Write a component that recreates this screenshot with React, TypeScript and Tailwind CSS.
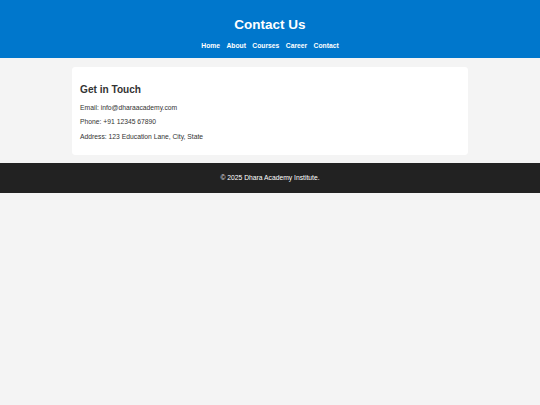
export default function App() {
  return (
    <div className="min-h-[405px] bg-[#f4f4f4] text-[#333] font-['Liberation_Sans',Arial,sans-serif]">
      <header className="bg-[#0077cc] text-white text-center pt-[8.2px] pb-[9px]">
        <h1 className="text-[13.5px] font-bold leading-[15.5px] my-[9px]">Contact Us</h1>
        <nav className="flex justify-center gap-[6.4px] text-[6.75px] font-bold leading-[7.8px]">
          <a className="text-white">Home</a>
          <a className="text-white">About</a>
          <a className="text-white">Courses</a>
          <a className="text-white">Career</a>
          <a className="text-white">Contact</a>
        </nav>
      </header>
      <main className="pt-[8.4px] pb-[8.4px]">
        <section className="mx-auto w-[396.6px] bg-white rounded-[3.4px] p-[8.4px]">
          <h2 className="text-[10.1px] font-bold leading-[11.6px] mt-[8.4px] mb-[8.4px]">Get in Touch</h2>
          <p className="text-[6.75px] leading-[7.8px] mb-[6.75px]">Email: info@dharaacademy.com</p>
          <p className="text-[6.75px] leading-[7.8px] mb-[6.75px]">Phone: +91 12345 67890</p>
          <p className="text-[6.75px] leading-[7.8px] mb-[5.75px]">Address: 123 Education Lane, City, State</p>
        </section>
      </main>
      <footer className="bg-[#222] text-white text-center py-[11px]">
        <p className="text-[6.75px] leading-[7.8px]">© 2025 Dhara Academy Institute.</p>
      </footer>
    </div>
  );
}
